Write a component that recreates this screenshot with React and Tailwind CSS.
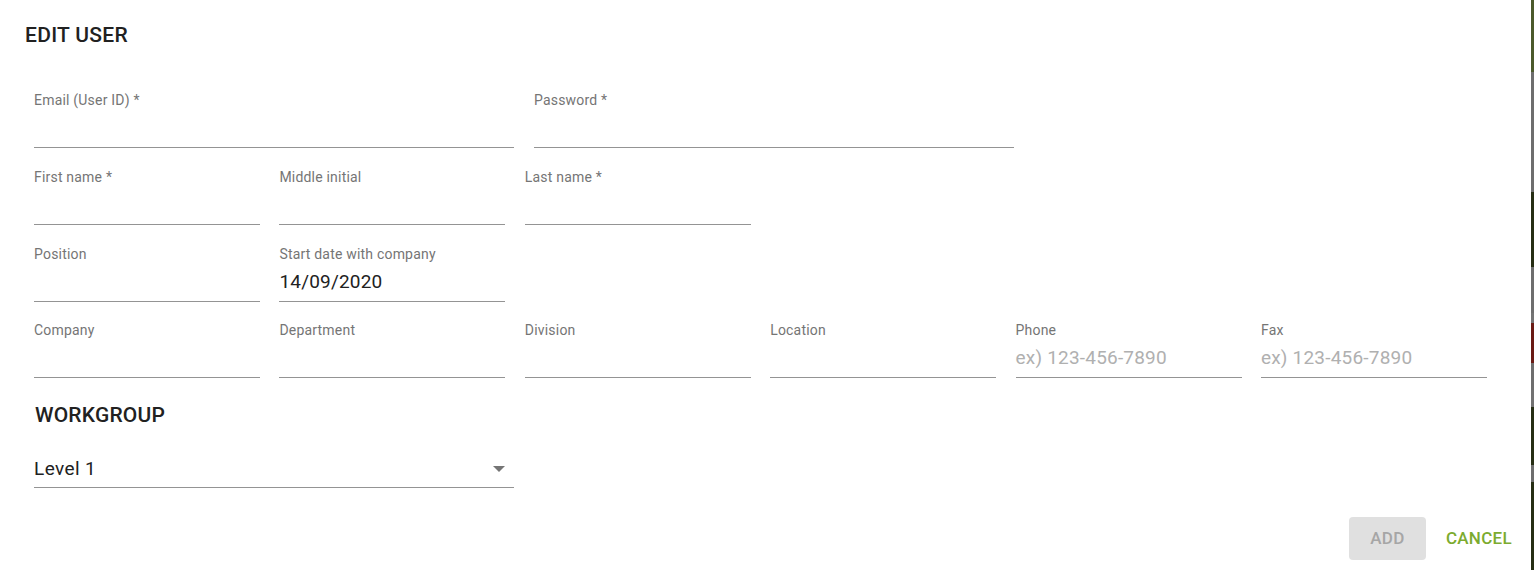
import React from "react";

function Field({ label, value, placeholder, className = "" }) {
  return (
    <div className={"flex h-[56px] flex-col border-b border-[#949494] " + className}>
      <div className="h-[16px] text-[14px] leading-[16px] tracking-[0.2px] text-[#757575]">{label}</div>
      <div className="pt-[8px] text-[19px] leading-[24px] tracking-[0.2px]">
        {value ? (
          <span className="text-[#212121]">{value}</span>
        ) : placeholder ? (
          <span className="text-[#b0b0b0]">{placeholder}</span>
        ) : (
          <span>&nbsp;</span>
        )}
      </div>
    </div>
  );
}

const strip = [
  ["h-[72px]", "bg-[#4b5a2b]"],
  ["h-[120px]", "bg-[#6e6e6e]"],
  ["h-[75px]", "bg-[#262e14]"],
  ["h-[46px]", "bg-[#6e6e6e]"],
  ["h-[10px]", "bg-[#747474]"],
  ["h-[40px]", "bg-[#6a1a14]"],
  ["h-[27px]", "bg-[#6e6e6e]"],
  ["h-[17px]", "bg-[#727272]"],
  ["h-[58px]", "bg-[#262e14]"],
  ["h-[17px]", "bg-[#6e6e6e]"],
  ["h-[88px]", "bg-[#262e14]"],
];

export default function App() {
  return (
    <div
      className="flex h-[570px] w-[1534px] overflow-hidden bg-white"
      style={{ fontFamily: "Roboto, 'Liberation Sans', sans-serif" }}
    >
      <div className="flex w-[1531px] flex-col bg-white">
        <div className="pl-[25px] pt-[22px] text-[21px] font-medium leading-[26px] tracking-[0.3px] text-[#212121]">
          EDIT USER
        </div>

        <div className="mt-[44px] pl-[34px]">
          <div className="flex gap-[20px]">
            <Field label="Email (User ID) *" className="w-[480px]" />
            <Field label="Password *" className="w-[480px]" />
          </div>

          <div className="mt-[21px] grid grid-cols-[repeat(6,226px)] gap-x-[19.4px]">
            <Field label="First name *" />
            <Field label="Middle initial" />
            <Field label="Last name *" />
          </div>

          <div className="mt-[21px] grid grid-cols-[repeat(6,226px)] gap-x-[19.4px]">
            <Field label="Position" />
            <Field label="Start date with company" value="14/09/2020" />
          </div>

          <div className="mt-[20px] grid grid-cols-[repeat(6,226px)] gap-x-[19.4px]">
            <Field label="Company" />
            <Field label="Department" />
            <Field label="Division" />
            <Field label="Location" />
            <Field label="Phone" placeholder="ex) 123-456-7890" />
            <Field label="Fax" placeholder="ex) 123-456-7890" />
          </div>

          <div className="mt-[24px] pl-[1px] text-[21px] font-medium leading-[26px] tracking-[0.2px] text-[#212121]">
            WORKGROUP
          </div>

          <div className="mt-[20px] flex h-[40px] w-[480px] items-center justify-between border-b border-[#949494] pt-[3px]">
            <span className="text-[19px] tracking-[0.4px] text-[#212121]">Level 1</span>
            <svg width="12" height="6" viewBox="0 0 12 6" className="mr-[9px]">
              <path d="M0 0h12L6 6z" fill="#757575" />
            </svg>
          </div>
        </div>

        <div className="mt-[29px] flex justify-end gap-[12px] pr-[11px]">
          <div className="flex h-[43px] w-[77px] items-center justify-center rounded-[4px] bg-[#e0e0e0] text-[17px] font-medium tracking-[0.3px] text-[#a6a6a6]">
            ADD
          </div>
          <div className="flex h-[43px] items-center px-[8px] text-[17px] font-medium tracking-[0.3px] text-[#7cab2f]">
            CANCEL
          </div>
        </div>
      </div>
      <div className="flex w-[3px] flex-col">
        {strip.map(([h, c], i) => (
          <div key={i} className={h + " " + c} />
        ))}
      </div>
    </div>
  );
}
